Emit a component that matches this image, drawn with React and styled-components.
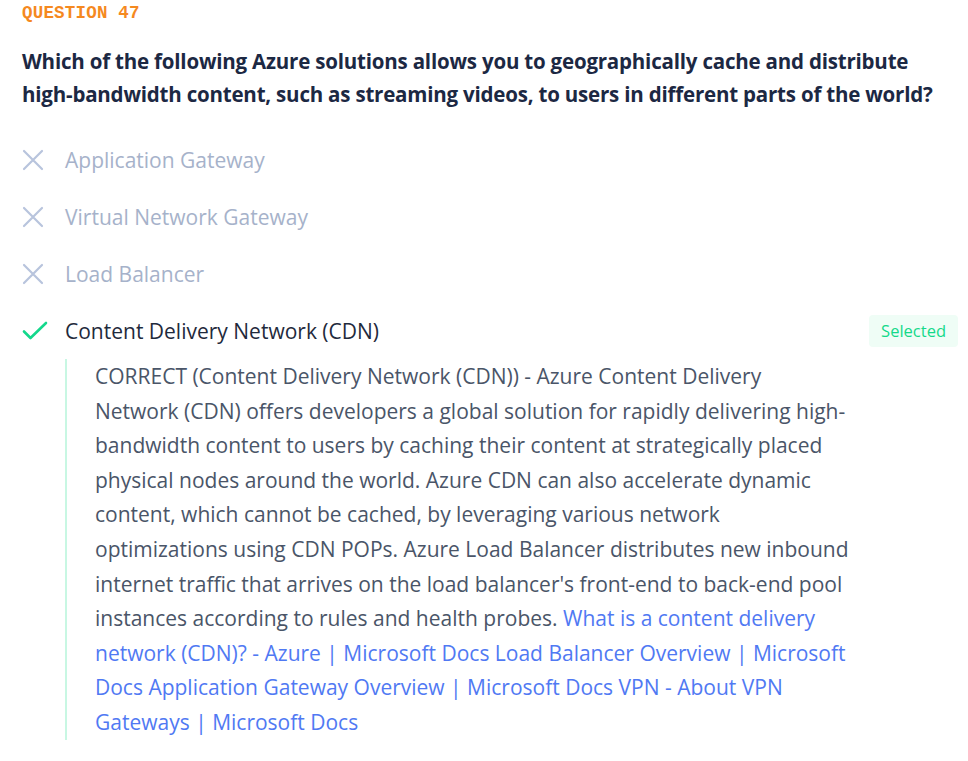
import React from 'react';
import styled, { createGlobalStyle } from 'styled-components';

const GlobalStyle = createGlobalStyle`
  body {
    margin: 0;
    background: #ffffff;
    font-family: "Open Sans", "Noto Sans", sans-serif;
  }
`

const Page = styled.div`
  padding: 2px 10px 0 22px;
  width: 968px;
  box-sizing: border-box;
`

const Label = styled.div`
  font-family: "Liberation Mono", "DejaVu Sans Mono", monospace;
  font-weight: 700;
  font-size: 17.5px;
  line-height: 22px;
  color: #f5891f;
  letter-spacing: 0.2px;
`

const Question = styled.h2`
  margin: 21px 0 20px 0;
  font-size: 20.5px;
  line-height: 33px;
  font-weight: 700;
  color: #1c2843;
  letter-spacing: -0.2px;
`

const Options = styled.div`
  display: flex;
  flex-direction: column;
`

const Option = styled.div`
  display: flex;
  align-items: center;
  height: 57px;
`

const Icon = styled.span`
  width: 43px;
  display: flex;
  align-items: center;
  flex-shrink: 0;
`

const OptionText = styled.span`
  flex: 1;
  font-size: 21px;
  color: ${props => props.correct ? '#1f2a3c' : '#a6b2ca'};
`

const Badge = styled.span`
  background: #effdf6;
  color: #14d98a;
  font-size: 16.5px;
  line-height: 22px;
  border-radius: 4px;
  padding: 5px 12px;
`

const Explanation = styled.div`
  margin: 0 0 0 43px;
  padding: 0 108.5px 0 28px;
  border-left: 2px solid #c8f7e3;
  font-size: 21px;
  line-height: 34.6px;
  color: #4a5568;
`

const Link = styled.a`
  color: #5079f3;
  text-decoration: none;
`

const Cross = () => (
  <svg width="22" height="22" viewBox="0 0 22 22">
    <path d="M2 2 L20 20 M20 2 L2 20" stroke="#b8c4dd" strokeWidth="2.2" strokeLinecap="round" fill="none" />
  </svg>
);

const Check = () => (
  <svg width="26" height="22" viewBox="0 0 26 22">
    <path d="M2 11.5 L8.5 18 L24 3" stroke="#14d88c" strokeWidth="2.6" strokeLinecap="round" strokeLinejoin="round" fill="none" />
  </svg>
);

const options = [
  { text: 'Application Gateway', correct: false },
  { text: 'Virtual Network Gateway', correct: false },
  { text: 'Load Balancer', correct: false },
  { text: 'Content Delivery Network (CDN)', correct: true },
];

const App = () => {
  return (
    <Page>
      <GlobalStyle />
      <Label>QUESTION 47</Label>
      <Question>
        Which of the following Azure solutions allows you to geographically cache and distribute
        high-bandwidth content, such as streaming videos, to users in different parts of the world?
      </Question>
      <Options>
        {options.map((opt, index) => (
          <Option key={index}>
            <Icon>{opt.correct ? <Check /> : <Cross />}</Icon>
            <OptionText correct={opt.correct}>{opt.text}</OptionText>
            {opt.correct && <Badge>Selected</Badge>}
          </Option>
        ))}
      </Options>
      <Explanation>
        CORRECT (Content Delivery Network (CDN)) - Azure Content Delivery Network (CDN) offers
        developers a global solution for rapidly delivering high-bandwidth content to users by
        caching their content at strategically placed physical nodes around the world. Azure CDN
        can also accelerate dynamic content, which cannot be cached, by leveraging various network
        optimizations using CDN POPs. Azure Load Balancer distributes new inbound internet traffic
        that arrives on the load balancer's front-end to back-end pool instances according to rules
        and health probes. <Link href="#">What is a content delivery network (CDN)? - Azure | Microsoft
        Docs Load Balancer Overview | Microsoft Docs Application Gateway Overview | Microsoft Docs VPN
        - About VPN Gateways | Microsoft Docs</Link>
      </Explanation>
    </Page>
  );
}

export default App;
